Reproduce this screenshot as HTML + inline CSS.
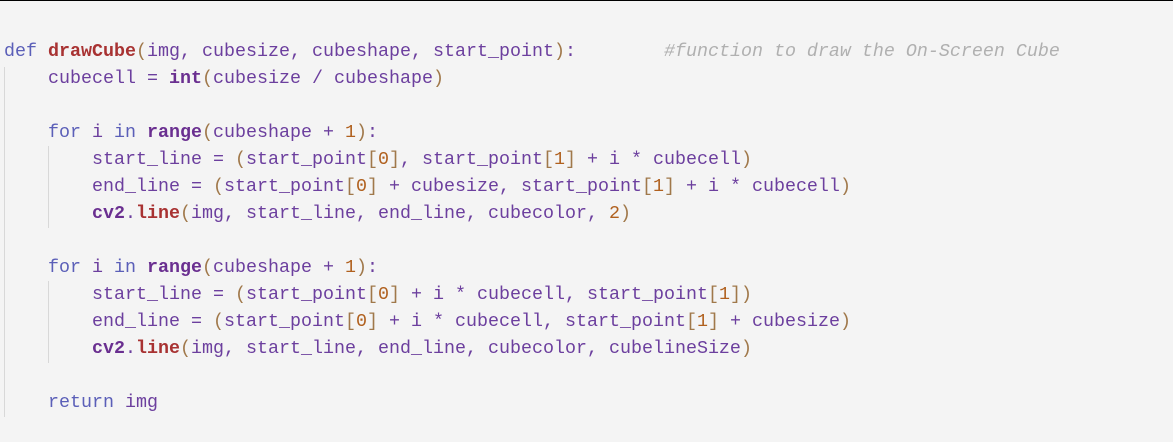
<!DOCTYPE html>
<html><head><meta charset="utf-8"><style>
html,body{margin:0;padding:0;}
body{width:1173px;height:442px;background:#f4f4f4;position:relative;overflow:hidden;border-top:1px solid #000;box-sizing:border-box;}
.l{position:absolute;left:4px;font-family:"Liberation Mono",monospace;font-size:18.33px;line-height:27px;white-space:pre;color:#6c3f9e;}
.k{color:#5b5fb8}
.f{color:#a83232;font-weight:bold}
.b{color:#6a2f90;font-weight:bold}
.p{color:#a0784a}
.n{color:#b0601e}
.c{color:#b0b0b0;font-style:italic}
.g{position:absolute;width:1px;background:#d8d8d8}
</style></head><body>
<div class="g" style="left:4px;top:66px;height:350px"></div>
<div class="g" style="left:48px;top:145px;height:82px"></div>
<div class="g" style="left:48px;top:280px;height:82px"></div>
<div class="l" style="top:37px"><span class="k">def</span> <span class="f">drawCube</span><span class="p">(</span>img, cubesize, cubeshape, start_point<span class="p">)</span>:        <span class="c">#function to draw the On-Screen Cube</span></div>
<div class="l" style="top:64px">    cubecell = <span class="b">int</span><span class="p">(</span>cubesize / cubeshape<span class="p">)</span></div>
<div class="l" style="top:118px">    <span class="k">for</span> i <span class="k">in</span> <span class="b">range</span><span class="p">(</span>cubeshape + <span class="n">1</span><span class="p">)</span>:</div>
<div class="l" style="top:145px">        start_line = <span class="p">(</span>start_point<span class="p">[</span><span class="n">0</span><span class="p">]</span>, start_point<span class="p">[</span><span class="n">1</span><span class="p">]</span> + i * cubecell<span class="p">)</span></div>
<div class="l" style="top:172px">        end_line = <span class="p">(</span>start_point<span class="p">[</span><span class="n">0</span><span class="p">]</span> + cubesize, start_point<span class="p">[</span><span class="n">1</span><span class="p">]</span> + i * cubecell<span class="p">)</span></div>
<div class="l" style="top:199px">        <span class="b">cv2</span>.<span class="f">line</span><span class="p">(</span>img, start_line, end_line, cubecolor, <span class="n">2</span><span class="p">)</span></div>
<div class="l" style="top:253px">    <span class="k">for</span> i <span class="k">in</span> <span class="b">range</span><span class="p">(</span>cubeshape + <span class="n">1</span><span class="p">)</span>:</div>
<div class="l" style="top:280px">        start_line = <span class="p">(</span>start_point<span class="p">[</span><span class="n">0</span><span class="p">]</span> + i * cubecell, start_point<span class="p">[</span><span class="n">1</span><span class="p">]</span><span class="p">)</span></div>
<div class="l" style="top:307px">        end_line = <span class="p">(</span>start_point<span class="p">[</span><span class="n">0</span><span class="p">]</span> + i * cubecell, start_point<span class="p">[</span><span class="n">1</span><span class="p">]</span> + cubesize<span class="p">)</span></div>
<div class="l" style="top:334px">        <span class="b">cv2</span>.<span class="f">line</span><span class="p">(</span>img, start_line, end_line, cubecolor, cubelineSize<span class="p">)</span></div>
<div class="l" style="top:388px">    <span class="k">return</span> img</div>
</body></html>
